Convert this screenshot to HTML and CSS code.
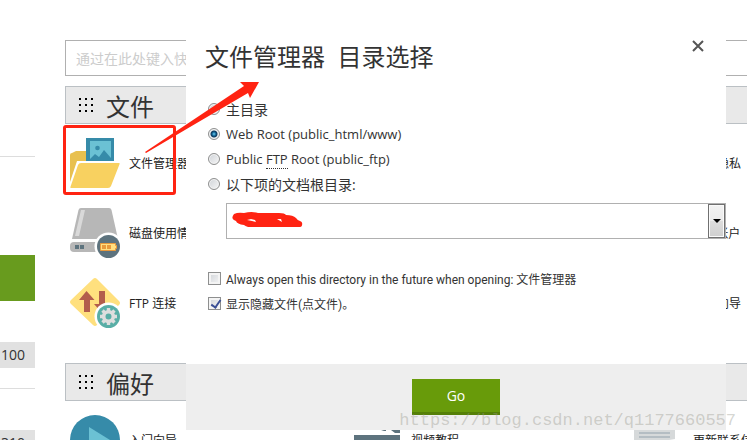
FILE: index.html
```html
<!DOCTYPE html>
<html lang="zh-CN">
<head>
  <meta charset="UTF-8">
  <meta name="viewport" content="width=device-width, initial-scale=1.0">
  <title>文件管理器</title>
  <link rel="stylesheet" href="styles.css">
</head>
<body>
  <div class="page">
    <aside class="sidebar">
      <div class="side-top"></div>
      <div class="side-banner"></div>
      <div class="side-stat">100</div>
      <div class="side-line"></div>
      <div class="side-stat">310</div>
    </aside>

    <main class="content">
      <input class="search" type="text" aria-label="搜索" placeholder="通过在此处键入快">

      <section class="group">
        <h2 class="group-title">
          <svg class="grip" viewBox="0 0 14 14"><path d="M0 0h2v2H0zM6 0h2v2H6zM12 0h2v2h-2zM0 6h2v2H0zM6 6h2v2H6zM12 6h2v2h-2zM0 12h2v2H0zM6 12h2v2H6zM12 12h2v2h-2z"/></svg>
          文件
        </h2>
        <div class="items">
          <a class="item first" href="#">
            <svg class="icon" viewBox="0 0 50 50">
              <path fill="#e8c04f" d="M0 48V17q0-2 2-2l4-2h11v13h-6z"/>
              <path fill="#368ba9" d="M16 0h28v23H16z"/>
              <path fill="#6bc1d4" d="M20 3h21v17L34 12l-5 7-4-3-5 5z"/>
              <circle cx="27.500" cy="10" r="2.300" fill="#368ba9"/>
              <path fill="#fff" d="M0 44L7 23h43v4H9L1 50H0z"/>
              <path fill="#f8d160" d="M11 25h38q1 0 .6 1L41 48q-.8 2-3 2H1q-1 0-.6-1L8 27q.8-2 3-2z"/>
            </svg>
            文件管理器
          </a>
          <a class="item third" href="#"><span class="icon"></span>目录隐私</a>
          <a class="item first" href="#">
            <svg class="icon" viewBox="0 0 50 50">
              <path fill="#b7b7b7" d="M11 0h28q2 0 2.500 2L48 31H2L8.500 2Q9 0 11 0z"/>
              <path fill="#d9d9d9" d="M11 2h4L9 28H5z"/>
              <rect y="34" width="48" height="10" rx="4" fill="#b7b7b7"/>
              <path fill="#5d737e" d="M5 37h4v4H5zM10 37h4v4h-4z"/>
              <circle cx="38.500" cy="38.500" r="14" fill="#fff"/>
              <circle cx="38.500" cy="38.500" r="11.500" fill="#5d737e"/>
              <path fill="#ffdf80" stroke="#e99a3c" d="M30.500 35.500h15v2h1v3h-1v2h-15z"/>
              <path fill="#e99a3c" d="M32 37h4v4h-4zM37 37h4v4h-4z"/>
            </svg>
            磁盘使用情况
          </a>
          <a class="item third" href="#"><span class="icon"></span>FTP 帐户</a>
          <a class="item first" href="#">
            <svg class="icon" viewBox="0 0 50 50">
              <path fill="#ffe07e" d="M23 1q2-2 4 0l22 22q2 2 0 4L27 47q-2 2-4 0L1 26q-2-2 0-4z"/>
              <path fill="#b25d4c" d="M16.500 13L24.500 22H20v12h-6V22H9zM29 13h6v13h5l-8 9-8-9h5z"/>
              <circle cx="38.500" cy="38.500" r="14" fill="#fff"/>
              <circle cx="38.500" cy="38.500" r="11.500" fill="#59aea6"/>
              <circle cx="38.500" cy="38.500" r="4.800" fill="none" stroke="#dedede" stroke-width="3.600"/>
              <path stroke="#dedede" stroke-width="3.400" d="M38.500 30v4M38.500 43v4M30 38.500h4M43 38.500h4M32.500 32.500l3 3M41.500 41.500l3 3M44.500 32.500l-3 3M35.500 41.500l-3 3"/>
            </svg>
            FTP 连接
          </a>
          <a class="item third" href="#"><span class="icon"></span>备份向导</a>
        </div>
      </section>

      <section class="group">
        <h2 class="group-title">
          <svg class="grip" viewBox="0 0 14 14"><path d="M0 0h2v2H0zM6 0h2v2H6zM12 0h2v2h-2zM0 6h2v2H0zM6 6h2v2H6zM12 6h2v2h-2zM0 12h2v2H0zM6 12h2v2H6zM12 12h2v2h-2z"/></svg>
          偏好
        </h2>
        <div class="items">
          <a class="item first" href="#">
            <svg class="icon" viewBox="0 0 50 50">
              <circle cx="25" cy="25" r="25" fill="#368ba9"/>
              <path fill="#6bc1d4" d="M19 12l21 13-21 13z"/>
            </svg>
            入门向导
          </a>
          <a class="item" href="#">
            <svg class="icon" viewBox="0 0 50 50">
              <path fill="#5d737e" d="M29 15l5-2v3h-2zM39 11h9v7h-5l-4-3zM2 20h46v26H2z"/>
            </svg>
            视频教程
          </a>
          <a class="item third" href="#">
            <svg class="icon" viewBox="0 0 50 50">
              <path fill="#d6d9da" d="M0 10h41v14l-6 1v21H0z"/>
              <path stroke="#b4bdc3" stroke-width="2" d="M5 18h31M5 22h31"/>
            </svg>
            更新联系信息
          </a>
        </div>
      </section>
    </main>
  </div>

  <form class="dialog">
    <div class="dialog-body">
      <div class="dialog-head">
        <h1>文件管理器&nbsp; 目录选择</h1>
        <button class="close" type="button" aria-label="关闭">
          <svg viewBox="0 0 12 12"><path d="M1 1l10 10M11 1L1 11"/></svg>
        </button>
      </div>

      <label class="choice"><input type="radio" name="dir">主目录</label>
      <label class="choice"><input type="radio" name="dir" checked><span class="latin">Web Root (public_html/www)</span></label>
      <label class="choice"><input type="radio" name="dir"><span class="latin">Public <abbr>FTP</abbr> Root (public_ftp)</span></label>
      <label class="choice"><input type="radio" name="dir">以下项的文档根目录:</label>

      <div class="select-box">
        <select aria-label="文档根目录"><option></option></select>
        <svg class="scribble" viewBox="0 0 71 16"><path fill="#ff2312" fill-rule="evenodd" d="M2 2q4-2 10-1 8-2 14 0h21q6 0 7 2 7 0 10 3 2 3 4 3 3 1 2 4 0 2-3 2H16q-3-1-4-2-7-1-8-4-6-2-2-7zM15 8l4-1 4 1 1 2-4-1zM45 7l4 0 1 3z"/></svg>
        <span class="arrow-btn"></span>
      </div>

      <label class="choice small"><input type="checkbox"><span>Always open this directory in the future when opening: 文件管理器</span></label>
      <label class="choice small"><input type="checkbox" checked>显示隐藏文件(点文件)。</label>
    </div>
    <div class="dialog-foot">
      <button class="go" type="submit">Go</button>
    </div>
  </form>

  <!-- red marks over the page -->
  <div class="mark-box"></div>
  <svg class="mark-arrow" viewBox="0 0 114 72"><path fill="#ff2312" d="M0 70L45 40 99 4 95 0H114L105 16 103 11 45 45 1 71z"/></svg>
  <div class="watermark">https://blog.csdn.net/q1177660557</div>
</body>
</html>
```

FILE: styles.css
```css
* {
  box-sizing: border-box;
}

body {
  margin: 0;
  position: relative;
  height: 100vh;
  overflow: hidden;
  background: #fff;
  color: #333;
  font-family: "Open Sans", "Noto Sans CJK SC", sans-serif;
  font-size: 14px;
}

.page {
  display: flex;
  gap: 30px;
}

/* Sidebar */
.sidebar {
  flex: 0 0 35px;
}

.side-top {
  height: 157px;
  border-bottom: 1px solid #ddd;
}

.side-banner {
  height: 46px;
  margin: 98px 0 41px;
  background: #689b1e;
}

.side-stat {
  height: 26px;
  padding-left: 1px;
  line-height: 26px;
  background: #e1e1e1;
}

.side-line {
  height: 1px;
  margin: 20px 0 41px;
  background: #ddd;
}

/* Main area */
.content {
  flex: 1 0 846px;
  padding-top: 40px;
}

.search {
  display: block;
  width: 100%;
  height: 36px;
  margin-bottom: 10px;
  padding: 0 10px;
  border: 1px solid #b0b0b0;
  font: inherit;
}

.search::placeholder {
  color: #ccc;
}

.group {
  margin-bottom: 35px;
}

.group-title {
  display: flex;
  align-items: center;
  gap: 13px;
  height: 38px;
  margin: 0;
  padding: 0 13px;
  background: #e9e9e9;
  border: 1px solid #bbc0c4;
  font-size: 24px;
  font-weight: normal;
}

.grip {
  width: 14px;
  height: 14px;
}

.items {
  display: grid;
  grid-template-columns: repeat(3, 1fr);
  gap: 20px 0;
  padding: 14px 0 0 5px;
  margin-right: -5px;
}

.item {
  display: flex;
  align-items: center;
  gap: 9px;
  color: #222;
  font-size: 12px;
  text-decoration: none;
}

.first {
  grid-column: 1;
}

.third {
  grid-column: 3;
}

.icon {
  width: 50px;
  height: 50px;
}

/* Dialog */
.dialog {
  position: absolute;
  top: 0;
  left: 186px;
  right: 21px;
  background: #fff;
}

.dialog-body {
  padding: 40px 0 48px 22px;
}

.dialog-head {
  display: flex;
  justify-content: space-between;
  align-items: flex-start;
  margin: 0 20px 23px -3px;
}

.dialog-head h1 {
  margin: 0;
  font-size: 24px;
  font-weight: normal;
  line-height: 33px;
}

.close {
  width: 14px;
  height: 12px;
  padding: 0;
  border: 0;
  background: none;
  cursor: pointer;
}

.close svg {
  display: block;
  width: 12px;
  height: 12px;
  stroke: #555;
  stroke-width: 2;
}

.choice {
  display: flex;
  align-items: center;
  gap: 6px;
  height: 25px;
}

.latin {
  font-size: 13px;
}

.choice abbr {
  border-bottom: 1px dotted #333;
}

.choice input {
  appearance: none;
  width: 12px;
  height: 12px;
  margin: 0;
  border: 1px solid #8e8f8f;
  background: linear-gradient(135deg, #cfd3d8, #f6f6f6);
  box-shadow: inset 0 0 0 1px #f4f4f4;
}

.choice input[type="radio"] {
  border-radius: 50%;
}

.choice input[type="radio"]:checked {
  background: radial-gradient(circle at 50% 50%, #6fd0f5 0, #0c5c8c 2px, #123a5c 3px, #e4e8ea 4px);
}

.small {
  gap: 5px;
  font-family: Roboto, "Noto Sans CJK SC", sans-serif;
  font-size: 12px;
}

.small input {
  width: 13px;
  height: 13px;
  box-shadow: inset 0 0 0 2px #f4f4f4;
}

.small input:checked::before {
  content: "";
  display: block;
  width: 4px;
  height: 8px;
  margin: 0 0 0 4px;
  border: solid #3a4f95;
  border-width: 0 2px 2px 0;
  transform: rotate(35deg);
}

.select-box {
  position: relative;
  margin: 7px 0 27px 18px;
}

.select-box select {
  display: block;
  appearance: none;
  width: 100%;
  height: 36px;
  border: 1px solid #b0b0b0;
  border-radius: 0;
  background: #fff;
  font: inherit;
}

.arrow-btn {
  position: absolute;
  top: 1px;
  right: 1px;
  bottom: 1px;
  width: 17px;
  border: 1px solid #707070;
  background: linear-gradient(#f2f2f2, #ebebeb 50%, #dddddd 50%, #cfcfcf);
  box-shadow: inset 0 0 0 1px #fafafa;
  pointer-events: none;
}

.arrow-btn::before {
  content: "";
  position: absolute;
  top: 14px;
  left: 4px;
  border: 4px solid transparent;
  border-top-color: #000;
  border-bottom: 0;
}

.dialog-foot {
  padding: 15px;
  background: #eee;
}

.go {
  display: block;
  width: 88px;
  height: 36px;
  margin: 0 auto;
  border: 0;
  border-bottom: 3px solid #558008;
  background: #689b0a;
  color: #fff;
  font: inherit;
  cursor: pointer;
}

/* Marks */
.scribble {
  position: absolute;
  top: 9px;
  left: 6px;
  width: 71px;
  height: 16px;
}

.mark-box {
  position: absolute;
  top: 125px;
  left: 63px;
  width: 113px;
  height: 70px;
  border: 3px solid #ff2312;
  border-radius: 3px;
}

.mark-arrow {
  position: absolute;
  top: 82px;
  left: 145px;
  width: 114px;
  height: 72px;
}

.watermark {
  position: absolute;
  right: 11px;
  bottom: 9px;
  color: rgba(150, 150, 140, 0.4);
  font-family: "Liberation Mono", monospace;
  font-size: 17px;
  line-height: 20px;
}
```
